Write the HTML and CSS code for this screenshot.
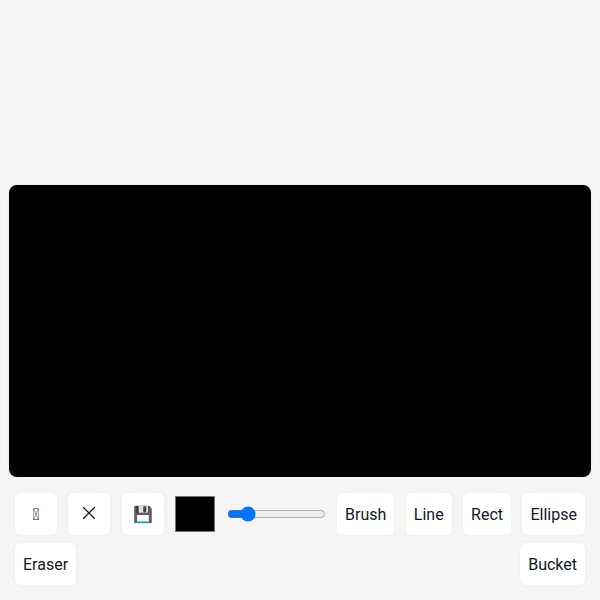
FILE: index.html
```
<!DOCTYPE html>
<html lang="en">
<head>
    <meta charset="UTF-8">
    <meta name="viewport" content="width=device-width, initial-scale=1.0">
    <title>Paint</title>
    <link rel="stylesheet" href="styles.css">
</head>
<body>
    <main class="stage">
        <canvas id="canvas" class="board"></canvas>
    </main>

    <div class="toolbar">
        <button type="button" id="undo" aria-label="Undo">&#xE000;</button>
        <button type="button" id="clear" aria-label="Clear">
            <svg class="icon" viewBox="0 0 14 14" aria-hidden="true">
                <path d="M1.2 1.2L12.8 12.8M12.8 1.2L1.2 12.8" fill="none" stroke="currentColor" stroke-width="1.3"/>
            </svg>
        </button>
        <button type="button" id="save" aria-label="Save">💾</button>
        <input type="color" id="color" class="color" value="#000000" aria-label="Color">
        <input type="range" id="size" class="size" min="1" max="50" value="9" aria-label="Brush size">
        <button type="button" data-tool="brush">Brush</button>
        <button type="button" data-tool="line">Line</button>
        <button type="button" data-tool="rect">Rect</button>
        <button type="button" data-tool="ellipse">Ellipse</button>
        <button type="button" data-tool="eraser">Eraser</button>
        <button type="button" data-tool="bucket">Bucket</button>
    </div>
</body>
</html>
```
FILE: styles.css
```
* {
    box-sizing: border-box;
}
body {
    margin: 0;
    min-height: 100vh;
    display: flex;
    flex-direction: column;
    background-color: #f5f5f5;
    color: #111827;
    font-family: Roboto, sans-serif;
}
.stage {
    flex: 1;
    display: flex;
    justify-content: center;
    align-items: flex-end;
}
.board {
    display: block;
    width: 97%;
    aspect-ratio: 582 / 292;
    background-color: #000;
    border-radius: 8px;
    box-shadow: 0 0 4px rgba(0, 0, 0, 0.05);
}
.toolbar {
    display: flex;
    flex-wrap: wrap;
    justify-content: space-between;
    align-items: center;
    gap: 8px;
    padding: 16px 15px 15px;
}
button {
    min-width: 42px;
    height: 42px;
    padding: 0 8px;
    border: none;
    border-radius: 6px;
    background-color: #fff;
    color: #111827;
    font-family: inherit;
    font-size: 16px;
    box-shadow: 0 0 4px rgba(0, 0, 0, 0.03);
    cursor: pointer;
}
.icon {
    display: block;
    width: 14px;
    height: 14px;
    margin: 0 auto 2px;
}
.color {
    width: 40px;
    height: 36px;
    padding: 0;
    border: none;
    background: none;
}
.color::-webkit-color-swatch-wrapper {
    padding: 0;
}
.size {
    width: 99px;
    margin: 0;
}
```
